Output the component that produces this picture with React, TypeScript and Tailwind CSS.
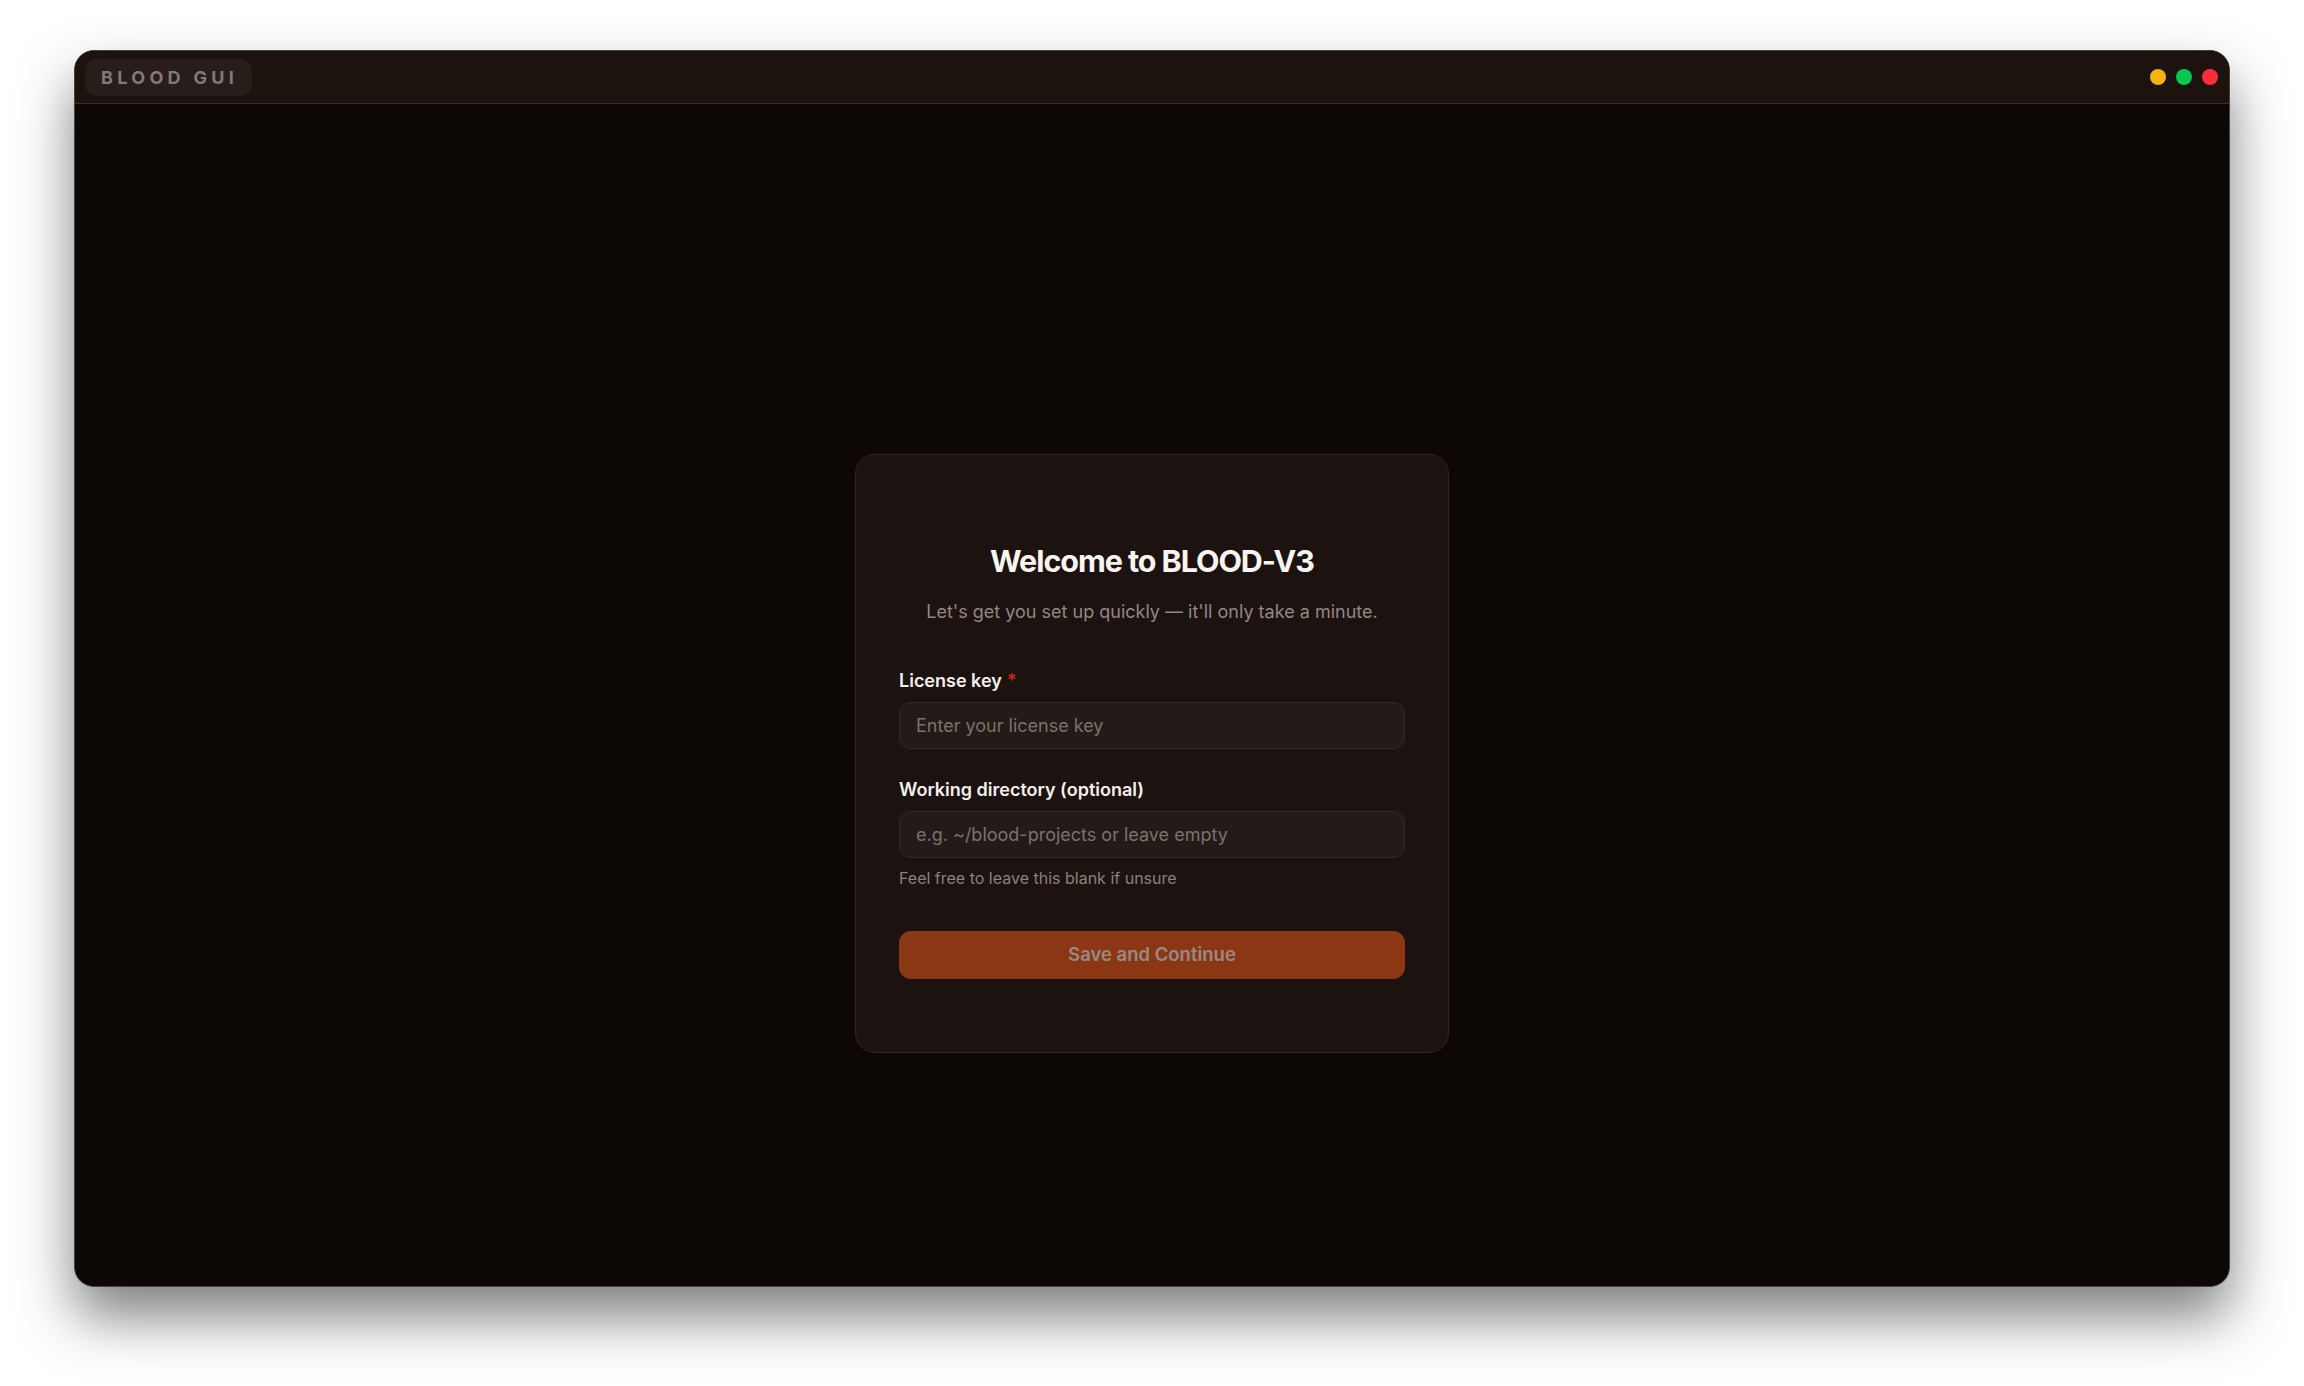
import React from "react";

function TrafficLights() {
  return (
    <div className="flex items-center gap-[10px] pr-[3px]">
      <span className="block h-4 w-4 rounded-full bg-[#f2b50f]" />
      <span className="block h-4 w-4 rounded-full bg-[#05c650]" />
      <span className="block h-4 w-4 rounded-full bg-[#fc2e3b]" />
    </div>
  );
}

function Field({
  label,
  placeholder,
  required,
  hint,
}: {
  label: string;
  placeholder: string;
  required?: boolean;
  hint?: string;
}) {
  return (
    <div className="flex flex-col">
      <label className="text-[18px] leading-[24px] font-semibold text-[#f6f0ed]">
        {label}
        {required && <span className="ml-[5px] text-[#d0201f]">*</span>}
      </label>
      <input
        type="text"
        placeholder={placeholder}
        className="mt-[9px] h-[47px] w-full rounded-[12px] border border-[#362b27] bg-[#241b18] px-[16px] text-[18px] text-[#e9e2de] outline-none placeholder:text-[#7b716d]"
      />
      {hint && (
        <p className="mt-[9px] text-[16px] leading-[22px] text-[#8b817d]">{hint}</p>
      )}
    </div>
  );
}

export default function App() {
  return (
    <div className="min-h-screen w-full bg-white pt-[50px] pb-[99px] px-[74px] font-[Inter,sans-serif]">
      <div className="flex h-[1237px] flex-col overflow-hidden rounded-[20px] border border-[#4a4340] bg-[#0d0806] shadow-[0_30px_55px_rgba(0,0,0,0.5)]">
        {/* title bar */}
        <div className="flex h-[53px] shrink-0 items-center justify-between border-b border-[#392c26] bg-[#1c130f] pl-[10px] pr-[8px]">
          <div className="flex h-[37px] items-center rounded-[12px] bg-[#271e1b] pl-[16px] pr-[14px]">
            <span className="text-[18px] font-bold tracking-[0.24em] text-[#857876]">BLOOD GUI</span>
          </div>
          <TrafficLights />
        </div>

        {/* setup card */}
        <div className="flex flex-1 items-center justify-center pt-[116px]">
          <div className="w-[594px] rounded-[20px] border border-[#2f2521] bg-[#1c1310] px-[43px] pt-[86px] pb-[73px]">
            <h1 className="text-center text-[30.5px] leading-[40px] font-bold tracking-[-0.035em] text-[#fbf5f2]">
              Welcome to BLOOD-V3
            </h1>
            <p className="mt-[17px] text-center text-[18px] leading-[28px] text-[#918783]">
              Let's get you set up quickly — it'll only take a minute.
            </p>

            <div className="mt-[43px]">
              <Field label="License key" placeholder="Enter your license key" required />
            </div>
            <div className="mt-[29px]">
              <Field
                label="Working directory (optional)"
                placeholder="e.g. ~/blood-projects or leave empty"
                hint="Feel free to leave this blank if unsure"
              />
            </div>

            <button
              type="button"
              className="mt-[42px] h-[48px] w-full rounded-[12px] bg-[#8c3714] text-[18.5px] font-semibold text-[#968a84]"
            >
              Save and Continue
            </button>
          </div>
        </div>
      </div>
    </div>
  );
}
